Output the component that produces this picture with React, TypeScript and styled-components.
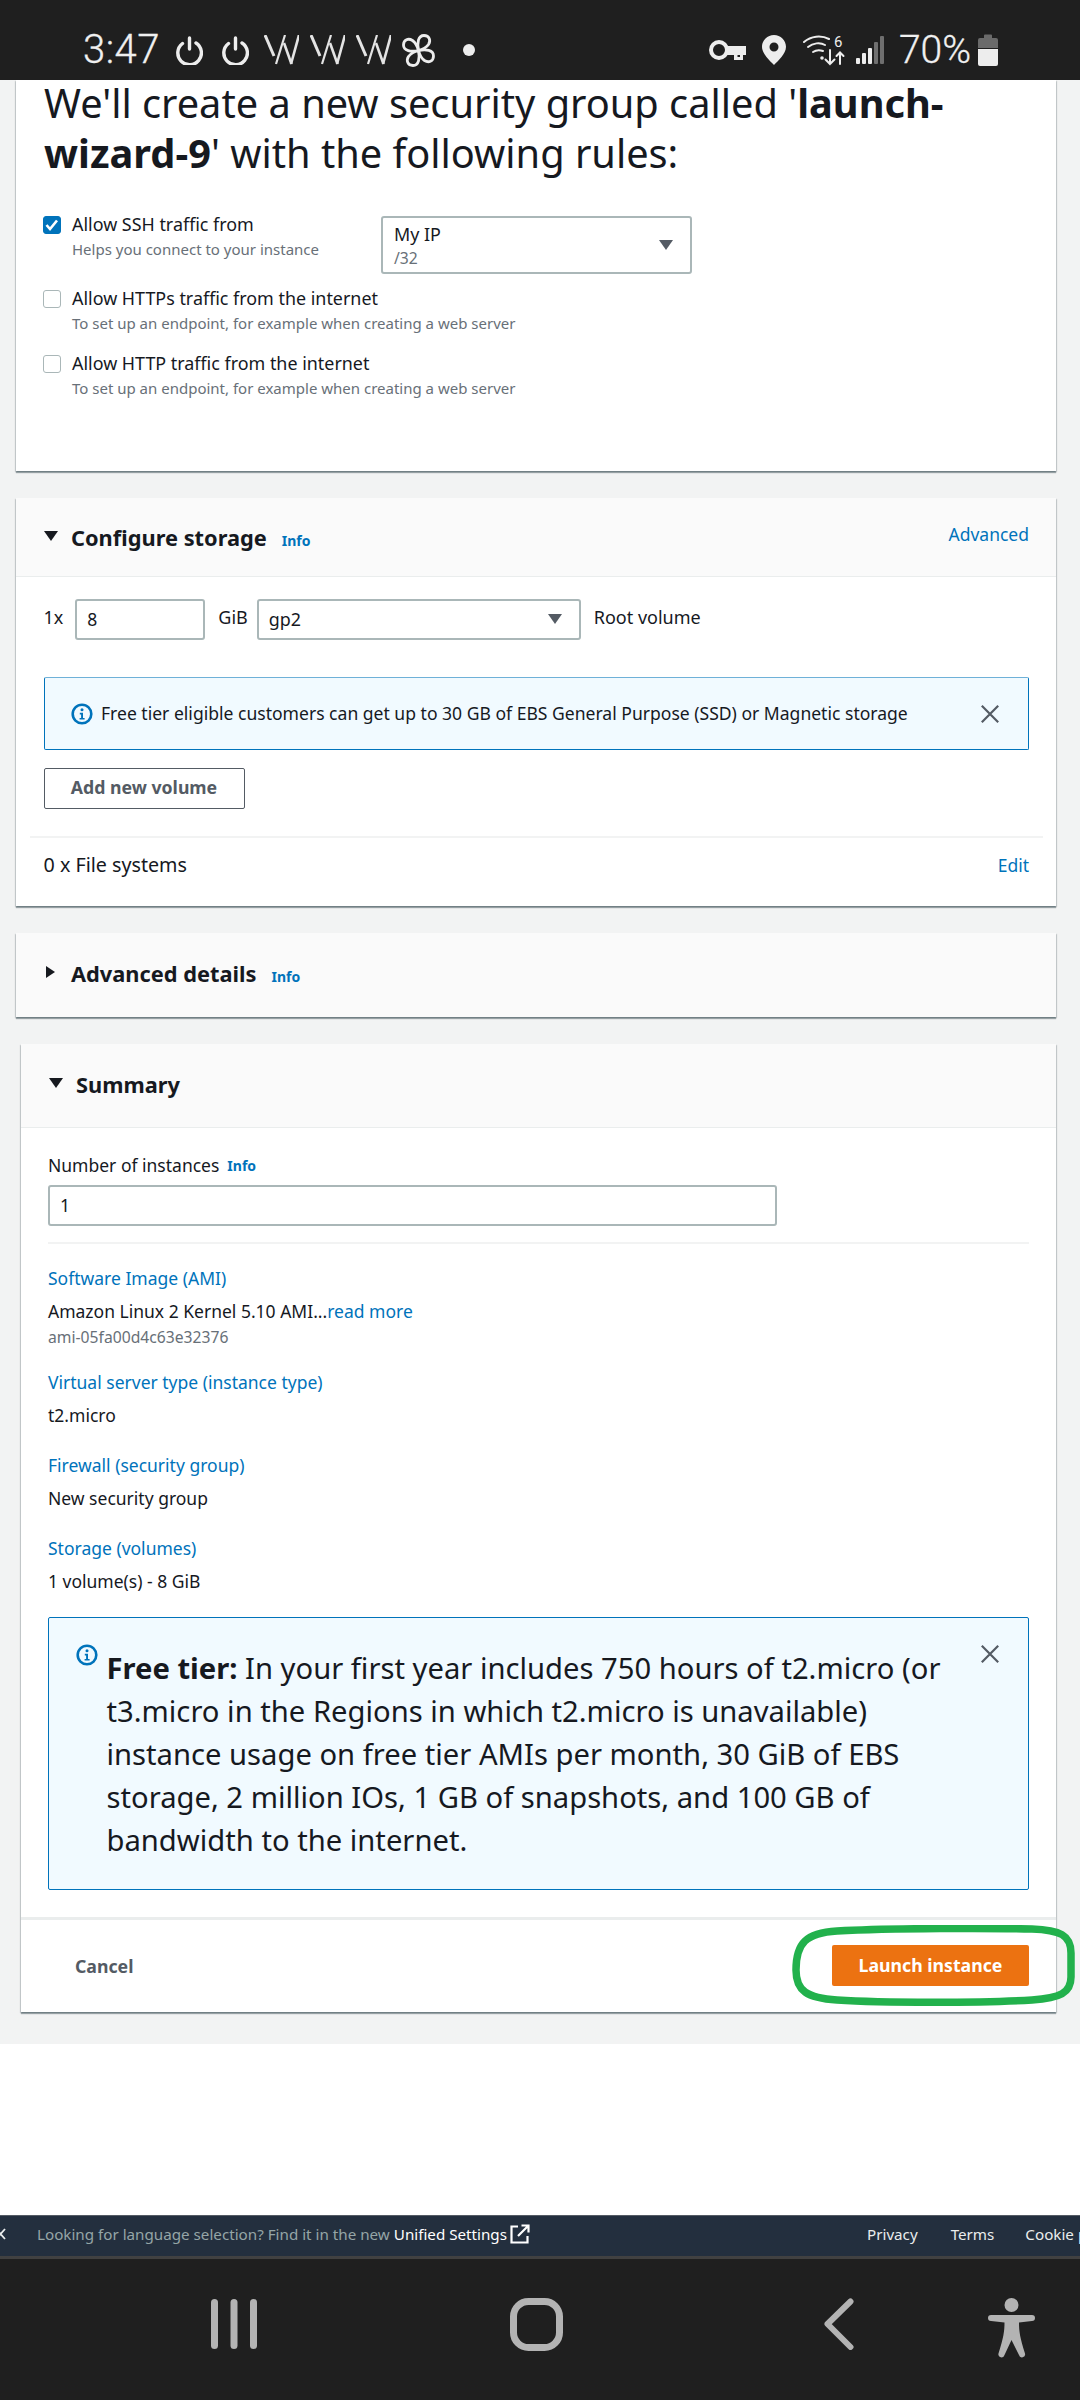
import React from 'react';
import styled, { createGlobalStyle } from 'styled-components';

const GlobalStyle = createGlobalStyle`
  * { box-sizing: border-box; }
  html, body { margin: 0; padding: 0; background: #fff; }
  body { font-family: 'Noto Sans', sans-serif; color: #16191f; }
`;

const Screen = styled.div`
  width: 1080px;
  height: 2400px;
  display: flex;
  flex-direction: column;
  overflow: hidden;
  background: #fff;
`;

// --- Android status bar ---

const StatusBar = styled.div`
  height: 80px;
  flex: none;
  background: #1f1f1f;
  color: #f0f0f0;
  display: flex;
  align-items: center;
  padding: 20px 82px 0 83px;
`;

const StatusTime = styled.span`
  font-family: Roboto, sans-serif;
  font-weight: 300;
  font-size: 40px;
  letter-spacing: 0.5px;
  line-height: 60px;
  margin-right: 15px;
  -webkit-text-stroke: 0.3px #f0f0f0;
`;

const StatusIcons = styled.div<{ $gap: number; $left?: number }>`
  display: flex;
  align-items: center;
  gap: ${(p) => p.$gap}px;
  margin-left: ${(p) => p.$left ?? 0}px;
`;

const StatusRight = styled.div`
  margin-left: auto;
  display: flex;
  align-items: center;
`;

const StatusPercent = styled.span`
  font-family: Roboto, sans-serif;
  font-weight: 300;
  font-size: 39px;
  line-height: 60px;
  margin: 0 7px 0 15px;
  -webkit-text-stroke: 0.3px #f0f0f0;
`;

// --- Console page ---

const Page = styled.main`
  flex: none;
  height: 1964px;
  background: #f2f3f3;
  padding: 0 24px 0 16px;
  display: flex;
  flex-direction: column;
`;

const Card = styled.section<{ $inset?: boolean }>`
  position: relative;
  background: #fff;
  margin-bottom: 27px;
  margin-left: ${(p) => (p.$inset ? '5px' : '0')};
  box-shadow: 0 2px 1px 0 rgba(0, 28, 36, 0.35), 1px 1px 1px 0 rgba(0, 28, 36, 0.15), -1px 1px 1px 0 rgba(0, 28, 36, 0.15);
`;

const RulesBody = styled.div`
  padding: 0 27px 55px 28px;
`;

const RulesHeading = styled.h2`
  margin: -2px 0 34px;
  font-size: 39.75px;
  line-height: 50px;
  font-weight: 400;
  span { font-weight: 700; }
`;

const OptionRow = styled.div<{ $tall?: boolean }>`
  display: flex;
  align-items: flex-start;
  margin-bottom: ${(p) => (p.$tall ? '12px' : '15px')};
  min-height: 50px;
`;

const CheckBox = styled.div<{ $checked?: boolean }>`
  width: 18px;
  height: 18px;
  flex: none;
  margin: 4px 11px 0 -1px;
  border-radius: 3px;
  border: 1px solid ${(p) => (p.$checked ? '#0073bb' : '#aab7b8')};
  background: ${(p) => (p.$checked ? '#0073bb' : '#fff')};
  display: flex;
  align-items: center;
  justify-content: center;
`;

const OptionText = styled.div`
  width: 309px;
  flex: none;
`;

const OptionLabel = styled.div`
  font-size: 17.9px;
  line-height: 25px;
  white-space: nowrap;
`;

const OptionHint = styled.div`
  font-size: 15px;
  line-height: 25px;
  color: #687078;
  white-space: nowrap;
`;

const SelectBox = styled.div<{ $width: number; $height: number; $top?: number }>`
  width: ${(p) => p.$width}px;
  height: ${(p) => p.$height}px;
  margin-top: ${(p) => p.$top ?? 0}px;
  flex: none;
  border: 2px solid #aab7b8;
  border-radius: 3px;
  background: #fff;
  display: flex;
  align-items: center;
  justify-content: space-between;
  padding: 0 17px 0 10px;
`;

const SelectStack = styled.div`
  margin: 1px 0 0 1px;
`;

const SelectValue = styled.div`
  font-size: 17.9px;
  line-height: 24px;
`;

const SelectHint = styled.div`
  font-size: 15.7px;
  line-height: 24px;
  color: #687078;
`;

const Caret = styled.span<{ $dir?: 'down' | 'right'; $color?: string; $size?: number }>`
  display: inline-block;
  flex: none;
  width: 0;
  height: 0;
  ${(p) => {
    const s = p.$size ?? 7;
    const c = p.$color ?? '#16191f';
    return p.$dir === 'right'
      ? `margin-left: 2px; border-top: ${s}px solid transparent; border-bottom: ${s}px solid transparent; border-left: ${s * 1.45}px solid ${c};`
      : `border-left: ${s}px solid transparent; border-right: ${s}px solid transparent; border-top: ${s * 1.45}px solid ${c};`;
  }}
`;

const CardHeader = styled.header<{ $height: number; $lift?: number }>`
  height: ${(p) => p.$height}px;
  background: #fafafa;
  border-bottom: 1px solid #eaeded;
  display: flex;
  align-items: center;
  padding: 2px 27px ${(p) => p.$lift ?? 0}px 28px;
`;

const HeaderCaret = styled.span`
  width: 27px;
  flex: none;
  display: flex;
  margin-bottom: 4px;
`;

const CardTitle = styled.h3`
  margin: 0;
  font-size: 21.8px;
  line-height: 30px;
  font-weight: 700;
`;

const InfoLink = styled.a`
  font-size: 14px;
  line-height: 20px;
  font-weight: 700;
  color: #0073bb;
  margin-left: 15px;
  margin-top: 5px;
`;

const HeaderAction = styled.a`
  margin-left: auto;
  margin-bottom: 8px;
  font-size: 17.5px;
  color: #0073bb;
`;

const StorageBody = styled.div`
  padding: 21px 27px 27px 27.5px;
`;

const VolumeRow = styled.div`
  display: flex;
  align-items: center;
  height: 42px;
  font-size: 18px;
`;

const VolumeText = styled.span<{ $left: number; $right: number }>`
  margin: -4px ${(p) => p.$right}px 0 ${(p) => p.$left}px;
  white-space: nowrap;
`;

const TextField = styled.div<{ $width: number }>`
  width: ${(p) => p.$width}px;
  height: 41px;
  flex: none;
  border: 2px solid #aab7b8;
  border-radius: 3px;
  background: #fff;
  font-size: 17.5px;
  line-height: 37px;
  padding-left: 10px;
`;

const InfoAlert = styled.div<{ $tall?: boolean }>`
  position: relative;
  display: flex;
  align-items: ${(p) => (p.$tall ? 'flex-start' : 'center')};
  background: #f1faff;
  border: 1px solid #0073bb;
  border-top-color: ${(p) => (p.$tall ? '#0073bb' : '#6fb1d8')};
  border-radius: 2px;
  height: ${(p) => (p.$tall ? '273px' : '73px')};
  margin-top: ${(p) => (p.$tall ? '23px' : '37px')};
  padding: ${(p) => (p.$tall ? '26px 0 0 27px' : '0 0 0 26px')};
`;

const AlertIcon = styled.svg`
  flex: none;
  width: 22px;
  height: 22px;
`;

const AlertText = styled.div`
  font-size: 17.56px;
  margin: -2px 0 0 8.5px;
  white-space: nowrap;
`;

const AlertLongText = styled.div`
  width: 870px;
  font-size: 29.2px;
  line-height: 43px;
  margin: 3.5px 0 0 8.5px;
  b { font-weight: 700; }
`;

const AlertClose = styled.svg`
  position: absolute;
  right: 29px;
  top: 27px;
  width: 18px;
  height: 18px;
`;

const OutlineButton = styled.div`
  width: 201px;
  height: 41px;
  margin-top: 18px;
  border: 1.5px solid #545b64;
  border-radius: 2px;
  color: #545b64;
  font-size: 17.7px;
  font-weight: 700;
  line-height: 37px;
  text-align: center;
`;

const Divider = styled.hr<{ $bleed?: number; $top: number; $bottom?: number }>`
  border: 0;
  border-top: 2px solid #f2f3f3;
  margin: ${(p) => p.$top}px ${(p) => -(p.$bleed ?? 0)}px ${(p) => p.$bottom ?? 0}px;
`;

const FileRow = styled.div`
  display: flex;
  justify-content: space-between;
  margin-top: 13px;
  font-size: 19.7px;
  line-height: 28px;
  a { color: #0073bb; font-size: 17.5px; }
`;

const CollapsedHeader = styled(CardHeader)`
  border-bottom: 0;
`;

const SummaryBody = styled.div`
  padding: 23.5px 27px 27px 27px;
`;

const FieldLabelRow = styled.div`
  display: flex;
  align-items: center;
  font-size: 17.5px;
  line-height: 26px;
  a { margin-left: 8px; margin-top: 2px; }
`;

const InstancesField = styled(TextField)`
  margin-top: 7px;
`;

const SummaryField = styled.div`
  margin-top: 24px;
`;

const FieldKey = styled.div`
  color: #0073bb;
  font-size: 17.5px;
  line-height: 26px;
`;

const FieldValue = styled.div`
  margin-top: 7px;
  font-size: 17.5px;
  line-height: 26px;
  a { color: #0073bb; }
`;

const FieldHint = styled.div`
  color: #687078;
  font-size: 15.7px;
  line-height: 21px;
  margin: 3px 0 -3px;
`;

const CardFooter = styled.footer`
  position: relative;
  height: 95px;
  border-top: 3px solid #eaeded;
  display: flex;
  align-items: center;
  justify-content: space-between;
  padding: 0 27px 0 54px;
`;

const CancelLink = styled.span`
  color: #545b64;
  font-size: 17.7px;
  font-weight: 700;
`;

const PrimaryButton = styled.div`
  width: 197px;
  height: 41px;
  background: #ec7211;
  border-radius: 2px;
  color: #fff;
  font-size: 17.7px;
  font-weight: 700;
  line-height: 41px;
  text-align: center;
`;

const Annotation = styled.svg`
  position: absolute;
  left: 771px;
  top: 5px;
  width: 283px;
  height: 81px;
  pointer-events: none;
`;

const Blank = styled.div`
  flex: none;
  height: 171px;
  background: #fff;
`;

// --- Console footer strip ---

const ConsoleFooter = styled.div`
  flex: none;
  height: 41px;
  background: #232f3e;
  border-top: 1px solid #545b64;
  padding-bottom: 5px;
  display: flex;
  align-items: center;
  overflow: hidden;
  font-size: 15.2px;
  white-space: nowrap;
`;

const FooterLeft = styled.div`
  width: 867px;
  flex: none;
  display: flex;
  align-items: center;
`;

const FooterNote = styled.span`
  color: #95a5a6;
  margin-left: 31px;
`;

const FooterStrong = styled.span`
  color: #fff;
  margin-left: 4px;
`;

const FooterExternal = styled.svg`
  margin-left: 3px;
`;

const FooterLink = styled.span<{ $gap: number }>`
  color: #eaeded;
  flex: none;
  margin-right: ${(p) => p.$gap}px;
`;

// --- Android navigation bar ---

const NavBar = styled.nav`
  flex: 1;
  background: #1f1f1f;
  border-top: 3px solid #414141;
  display: flex;
  align-items: flex-start;
  padding: 39px 0 0 0;
`;

const NavIcon = styled.svg<{ $left: number }>`
  flex: none;
  margin-left: ${(p) => p.$left}px;
  color: #b3b3b3;
`;

const InfoGlyph = () => (
  <AlertIcon viewBox="0 0 22 22">
    <circle cx="11" cy="11" r="9.3" fill="none" stroke="#0073bb" strokeWidth="2.6" />
    <circle cx="11" cy="6.8" r="1.5" fill="#0073bb" />
    <path d="M8.8 9.8h3.2v5.2h1.6v1.6H8.6V15h1.5v-3.6H8.8z" fill="#0073bb" />
  </AlertIcon>
);

const CloseGlyph = () => (
  <AlertClose viewBox="0 0 18 18">
    <path d="M.8.8l16.400 16.400M17.200.8L.8 17.200" stroke="#545b64" strokeWidth="2.2" fill="none" />
  </AlertClose>
);

const PowerIcon = () => (
  <svg width="28" height="30" viewBox="0 0 28 30" fill="none" stroke="#ededed" strokeWidth="3.4" strokeLinecap="round">
    <path d="M7.500 8.500A11.800 11.800 0 1 0 21 8" />
    <path d="M14.500 3v11" />
  </svg>
);

const WaveIcon = () => (
  <svg width="35" height="30" viewBox="0 0 35 30" fill="none" stroke="#e4e4e4">
    <path d="M1 0l9 21" strokeWidth="3" />
    <path d="M21 0l-9 29" strokeWidth="2.2" />
    <path d="M20 8l7.500 21" strokeWidth="2.6" />
    <path d="M35 0l-8 29" strokeWidth="2.6" />
  </svg>
);

const FanPetal = ({ angle }: { angle: number }) => (
  <path d="M16.500 16.500C15 9 16 1.500 22 1.500c5.500 0 7 5 4.500 9-2.500 3.500-6 5-10 6z" transform={`rotate(${angle} 16.500 16.500)`} />
);

const FanIcon = () => (
  <svg width="33" height="33" viewBox="0 0 33 33" fill="none" stroke="#ededed" strokeWidth="2.8" strokeLinejoin="round">
    <FanPetal angle={0} />
    <FanPetal angle={90} />
    <FanPetal angle={180} />
    <FanPetal angle={270} />
  </svg>
);

const KeyIcon = () => (
  <svg width="37" height="24" viewBox="0 0 37 24">
    <circle cx="10" cy="12" r="8" fill="none" stroke="#ededed" strokeWidth="4" />
    <path d="M17 8h20v9h-3v5h-9v-5h-8z" fill="#ededed" />
    <path d="M28.500 17v2h2.500v-2z" fill="#1f1f1f" />
  </svg>
);

const PinIcon = () => (
  <svg width="24" height="30" viewBox="0 0 24 30">
    <path fillRule="evenodd" d="M12 0C5.4 0 0 5.2 0 11.8 0 19 8 26 12 30c4-4 12-11 12-18.2C24 5.2 18.600 0 12 0zm0 7.500a4.500 4.500 0 1 1 0 9 4.500 4.500 0 0 1 0-9z" fill="#ededed" />
  </svg>
);

const WifiIcon = () => (
  <svg width="42" height="32" viewBox="0 0 42 32" fill="none" stroke="#ededed" strokeWidth="2" strokeLinecap="round">
    <path d="M1 8c7-6 17-7 25-3" />
    <path d="M5 13c5-4 12-5 17-2" />
    <path d="M10 18c3-2 7-2 10-1" />
    <circle cx="19" cy="24" r="1.800" fill="#ededed" stroke="none" />
    <path d="M27 16v14M22.500 25.500l4.500 4.500 4.500-4.500" />
    <path d="M37 30V19M33.500 22l3.500-3.500 3.500 3.500" />
    <text x="31" y="13" fontFamily="Roboto, sans-serif" fontSize="15" fill="#ededed" stroke="none">6</text>
  </svg>
);

const SignalIcon = () => (
  <svg width="28" height="30" viewBox="0 0 28 30">
    <rect x="0" y="23" width="4" height="6" rx="1" fill="#ededed" />
    <rect x="6" y="18" width="4" height="11" rx="1" fill="#ededed" />
    <rect x="12" y="13" width="4" height="16" rx="1" fill="#ededed" />
    <rect x="18" y="7" width="4" height="22" rx="1" fill="#6f6f6f" />
    <rect x="24" y="1" width="4" height="28" rx="1" fill="#6f6f6f" />
  </svg>
);

const BatteryIcon = () => (
  <svg width="20" height="32" viewBox="0 0 20 32">
    <path d="M6 1.500a1 1 0 0 1 1-1h6a1 1 0 0 1 1 1V4h4a2 2 0 0 1 2 2v8H0V6a2 2 0 0 1 2-2h4z" fill="#6a6a6a" />
    <path d="M0 15h20v15a2 2 0 0 1-2 2H2a2 2 0 0 1-2-2z" fill="#ededed" />
  </svg>
);

const App = () => (
  <Screen>
    <GlobalStyle />
    <StatusBar>
      <StatusTime>3:47</StatusTime>
      <StatusIcons $gap={18}>
        <PowerIcon />
        <PowerIcon />
      </StatusIcons>
      <StatusIcons $gap={11} $left={15}>
        <WaveIcon />
        <WaveIcon />
        <WaveIcon />
        <FanIcon />
      </StatusIcons>
      <StatusIcons $gap={0} $left={28}>
        <svg width="12" height="12" viewBox="0 0 12 12"><circle cx="6" cy="6" r="6" fill="#ededed" /></svg>
      </StatusIcons>
      <StatusRight>
        <StatusIcons $gap={16}>
          <KeyIcon />
          <PinIcon />
        </StatusIcons>
        <StatusIcons $gap={11} $left={17}>
          <WifiIcon />
          <SignalIcon />
        </StatusIcons>
        <StatusPercent>70%</StatusPercent>
        <BatteryIcon />
      </StatusRight>
    </StatusBar>

    <Page>
      <Card>
        <RulesBody>
          <RulesHeading>
            We'll create a new security group called '<span>launch-wizard-9</span>' with the following rules:
          </RulesHeading>
          <OptionRow $tall>
            <CheckBox $checked>
              <svg width="14" height="12" viewBox="0 0 14 12" fill="none" stroke="#fff" strokeWidth="2.600">
                <path d="M1.500 6l3.500 4 7-8.500" />
              </svg>
            </CheckBox>
            <OptionText>
              <OptionLabel>Allow SSH traffic from</OptionLabel>
              <OptionHint>Helps you connect to your instance</OptionHint>
            </OptionText>
            <SelectBox $width={311} $height={58} $top={4}>
              <SelectStack>
                <SelectValue>My IP</SelectValue>
                <SelectHint>/32</SelectHint>
              </SelectStack>
              <Caret $color="#545b64" />
            </SelectBox>
          </OptionRow>
          <OptionRow>
            <CheckBox />
            <OptionText>
              <OptionLabel>Allow HTTPs traffic from the internet</OptionLabel>
              <OptionHint>To set up an endpoint, for example when creating a web server</OptionHint>
            </OptionText>
          </OptionRow>
          <OptionRow>
            <CheckBox />
            <OptionText>
              <OptionLabel>Allow HTTP traffic from the internet</OptionLabel>
              <OptionHint>To set up an endpoint, for example when creating a web server</OptionHint>
            </OptionText>
          </OptionRow>
        </RulesBody>
      </Card>

      <Card>
        <CardHeader $height={79}>
          <HeaderCaret><Caret /></HeaderCaret>
          <CardTitle>Configure storage</CardTitle>
          <InfoLink>Info</InfoLink>
          <HeaderAction>Advanced</HeaderAction>
        </CardHeader>
        <StorageBody>
          <VolumeRow>
            <VolumeText $left={0} $right={12}>1x</VolumeText>
            <TextField $width={130}>8</TextField>
            <VolumeText $left={13} $right={9}>GiB</VolumeText>
            <SelectBox $width={324} $height={41}>
              <SelectValue>gp2</SelectValue>
              <Caret $color="#545b64" />
            </SelectBox>
            <VolumeText $left={13} $right={0}>Root volume</VolumeText>
          </VolumeRow>
          <InfoAlert>
            <InfoGlyph />
            <AlertText>Free tier eligible customers can get up to 30 GB of EBS General Purpose (SSD) or Magnetic storage</AlertText>
            <CloseGlyph />
          </InfoAlert>
          <OutlineButton>Add new volume</OutlineButton>
          <Divider $top={27} $bleed={14} />
          <FileRow>
            <span>0 x File systems</span>
            <a>Edit</a>
          </FileRow>
        </StorageBody>
      </Card>

      <Card>
        <CollapsedHeader $height={84} $lift={4}>
          <HeaderCaret><Caret $dir="right" $size={6.500} /></HeaderCaret>
          <CardTitle>Advanced details</CardTitle>
          <InfoLink>Info</InfoLink>
        </CollapsedHeader>
      </Card>

      <Card $inset>
        <CardHeader $height={84} $lift={4}>
          <HeaderCaret><Caret /></HeaderCaret>
          <CardTitle>Summary</CardTitle>
        </CardHeader>
        <SummaryBody>
          <FieldLabelRow>
            Number of instances
            <InfoLink>Info</InfoLink>
          </FieldLabelRow>
          <InstancesField $width={729}>1</InstancesField>
          <Divider $top={16} $bottom={-3} />
          <SummaryField>
            <FieldKey>Software Image (AMI)</FieldKey>
            <FieldValue>Amazon Linux 2 Kernel 5.10 AMI...<a>read more</a></FieldValue>
            <FieldHint>ami-05fa00d4c63e32376</FieldHint>
          </SummaryField>
          <SummaryField>
            <FieldKey>Virtual server type (instance type)</FieldKey>
            <FieldValue>t2.micro</FieldValue>
          </SummaryField>
          <SummaryField>
            <FieldKey>Firewall (security group)</FieldKey>
            <FieldValue>New security group</FieldValue>
          </SummaryField>
          <SummaryField>
            <FieldKey>Storage (volumes)</FieldKey>
            <FieldValue>1 volume(s) - 8 GiB</FieldValue>
          </SummaryField>
          <InfoAlert $tall>
            <InfoGlyph />
            <AlertLongText>
              <b>Free tier:</b> In your first year includes 750 hours of t2.micro (or t3.micro in the Regions in which t2.micro is unavailable) instance usage on free tier AMIs per month, 30 GiB of EBS storage, 2 million IOs, 1 GB of snapshots, and 100 GB of bandwidth to the internet.
            </AlertLongText>
            <CloseGlyph />
          </InfoAlert>
        </SummaryBody>
        <CardFooter>
          <CancelLink>Cancel</CancelLink>
          <PrimaryButton>Launch instance</PrimaryButton>
          <Annotation viewBox="0 0 283 81">
            <path
              d="M45 6C100 3 200 3 240 4c28 1 39 6 39 24v24c0 16-11 21-39 23-50 3-150 3-195 0C15 73 4 66 4 45 4 18 14 8 45 6z"
              fill="none"
              stroke="#22b14c"
              strokeWidth="7.5"
            />
          </Annotation>
        </CardFooter>
      </Card>
    </Page>

    <Blank />

    <ConsoleFooter>
      <FooterLeft>
        <svg width="6" height="14" viewBox="0 0 6 14" fill="none" stroke="#eaeded" strokeWidth="1.800"><path d="M-4 2l9 10M5 2l-9 10" /></svg>
        <FooterNote>Looking for language selection? Find it in the new</FooterNote>
        <FooterStrong>Unified Settings</FooterStrong>
        <FooterExternal width="20" height="20" viewBox="0 0 20 20" fill="none" stroke="#fff" strokeWidth="2.200">
          <path d="M8 2.500H1.500v16h16V12" />
          <path d="M8 12L18 2M11.500 1.500h7v7" />
        </FooterExternal>
      </FooterLeft>
      <FooterLink $gap={33}>Privacy</FooterLink>
      <FooterLink $gap={31}>Terms</FooterLink>
      <FooterLink $gap={0}>Cookie preferences</FooterLink>
    </ConsoleFooter>

    <NavBar>
      <NavIcon $left={211} width="46" height="52" viewBox="0 0 46 52" fill="currentColor">
        <rect x="0" y="1" width="7" height="50" rx="3.500" />
        <rect x="19.500" y="1" width="7" height="50" rx="3.500" />
        <rect x="39" y="1" width="7" height="50" rx="3.500" />
      </NavIcon>
      <NavIcon $left={253} width="53" height="53" viewBox="0 0 53 53" fill="none" stroke="currentColor" strokeWidth="7">
        <rect x="3.500" y="3.500" width="46" height="46" rx="15" />
      </NavIcon>
      <NavIcon $left={261} width="30" height="52" viewBox="0 0 30 52" fill="none" stroke="currentColor" strokeWidth="6" strokeLinecap="round" strokeLinejoin="round">
        <path d="M26.500 3.500L3.500 26l23 23" />
      </NavIcon>
      <NavIcon $left={134} width="47" height="60" viewBox="0 0 47 60" fill="currentColor">
        <circle cx="23.500" cy="7" r="7" />
        <path d="M3 17h41a3 3 0 0 1 0 6l-13 1.500c0 9 1 15 6 31a3 3 0 0 1-6 1.500L23.500 42 16.500 57a3 3 0 0 1-6-1.500c5-16 6-22 6-31L3 23a3 3 0 0 1 0-6z" />
      </NavIcon>
    </NavBar>
  </Screen>
);

export default App;
